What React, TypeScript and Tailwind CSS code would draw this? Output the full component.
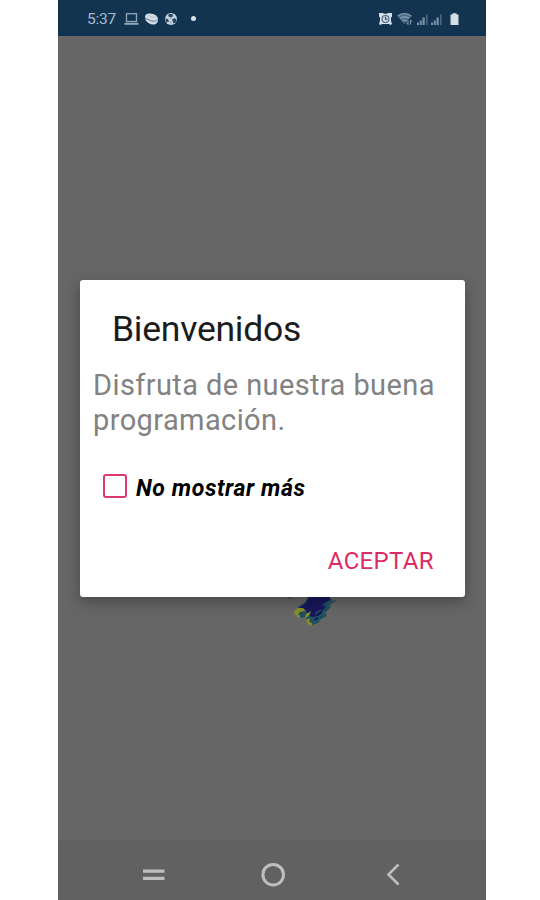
function LaptopIcon() {
  return (
    <svg width="15" height="14" viewBox="0 0 15 14" fill="none" stroke="#8fa6b8">
      <rect x="2.5" y="1.7" width="10" height="7.800" strokeWidth="1.300" />
      <path d="M0.5 11.8h14" strokeWidth="2" />
    </svg>
  );
}

function BallIcon() {
  return (
    <svg width="15" height="14" viewBox="0 0 15 14">
      <path d="M1 5C1 2 4 1 6 1.500c4 .3 8 2 8 6C14 11 12 12.500 9.500 12.500 6 12.500 3 10.500 1.500 8z" fill="#d3dee6" />
      <path d="M1 6.500c3 .2 5 2.500 8 2.700 2 .1 3-.5 4.500-1.500" stroke="#57748c" strokeWidth="1" fill="none" />
      <path d="M4 3.500l4 1.500 4 .2" stroke="#a5b7c5" strokeWidth=".8" fill="none" />
    </svg>
  );
}

function SoccerIcon() {
  return (
    <svg width="14" height="14" viewBox="0 0 14 14">
      <circle cx="7" cy="7" r="6" fill="#c4d2dd" />
      <path d="M5 2l3.500 0 .5 2.500-2.500 1L4 4zM1.300 6.500l2.700.5 1 2.500-2.500 1zM8 7.500l2.500-1.500 2 1.500-.5 3-2.500 1z" fill="#2a4a66" />
      <path d="M6.500 5.500L8 7.500M5 9.500l3 1.500" stroke="#7d95a8" strokeWidth=".8" />
    </svg>
  );
}

function AlarmIcon() {
  return (
    <svg width="15" height="14" viewBox="0 0 15 14">
      <path d="M1 1h4l1 .8h3L10 1h4v3.500l-1 1v3.500l1 3-1.500 1-1.500-1H4L2.500 13 1 12l1-3V5.500L1 4.500z" fill="#d5e0e8" />
      <circle cx="7.500" cy="7" r="3.500" stroke="#496780" strokeWidth="1.100" fill="#c5d3de" />
      <path d="M7.500 4.800V7.300h2" stroke="#30506b" strokeWidth="1.100" fill="none" />
    </svg>
  );
}

function WifiIcon() {
  return (
    <svg width="16" height="14" viewBox="0 0 16 14" fill="none">
      <path d="M.3 4C4.500 0 10.500 0 14.700 4L7.500 12z" fill="#4c6b84" />
      <path d="M.8 4C4.500.7 10.500.7 14.200 4M3 6.600c2.800-2.300 6.200-2.300 9 0M5.200 9c1.500-1.200 3-1.200 4.500 0" stroke="#8299ab" strokeWidth="1.300" />
      <path d="M11 12.500V8.500M9.700 11l1.300 1.500M13.500 8v4.500M13.500 8l1.500 1.500" stroke="#8fa5b6" />
    </svg>
  );
}

function SignalIcon() {
  return (
    <svg width="12" height="13" viewBox="0 0 12 13" fill="#7790a4">
      <path d="M0 9.500h2V12H0zM2.800 7.500h2V12h-2zM5.500 4.500h2.300V12H5.500z" />
      <path d="M9 1.500h1.500V12H9z" opacity=".6" />
    </svg>
  );
}

function BatteryIcon() {
  return (
    <svg width="10" height="14" viewBox="0 0 10 14" fill="#d3dee6">
      <path d="M2.500 1.300h4v1.200h2V13H.5V2.500h2z" />
    </svg>
  );
}

function StatusBar() {
  return (
    <header className="flex h-[36px] shrink-0 items-center justify-between bg-[#133450] pl-[29px] pr-[26px] pt-[2px]">
      <div className="flex items-center gap-[5px]">
        <span className="w-[32px] text-[15.500px] leading-[18px] tracking-[-0.200px] text-[#a9bccb]">5:37</span>
        <LaptopIcon />
        <BallIcon />
        <SoccerIcon />
        <span className="mb-px ml-2 size-[5px] rounded-full bg-[#d7e1e8]" />
      </div>
      <div className="flex items-center gap-[4px]">
        <AlarmIcon />
        <WifiIcon />
        <div className="flex items-center gap-[2px]">
          <SignalIcon />
          <SignalIcon />
        </div>
        <span className="ml-[3px]">
          <BatteryIcon />
        </span>
      </div>
    </header>
  );
}

function Logo() {
  return (
    <svg width="54" height="36" viewBox="0 0 54 36" className="absolute left-[228px] top-[597px]">
      <path d="M0 0l4 2 3-1z" fill="#505030" />
      <path d="M23 -3l-3 7-8 6-2 4-1 4 4 0 1 3 6-1 2 4 4 4 6-2 3-4 6-3-2-3 6-6-2-2 8-5-7 1-3-7z" fill="#20505a" />
      <path d="M24 -3l-4 9-7 5 0 4 7-1 3 5 5 1 1 4 6-4 1-5 5-3 4-9-3-6z" fill="#17175c" />
      <path d="M9 13l3-2 5 0 3 3-6 1-3 4-3-2zM10 19l4-1 0 3zM20 17l5-3-2 5-4 2zM20 23l4-2-1 4 3 1-1 3-3-2z" fill="#8a8f29" />
      <path d="M29 17l6-4M26 23l5-4M37 8l9-5-6 6 4-1-7 6 2 2-7 4 2 2-6 4" fill="none" stroke="#1f5965" strokeWidth="1.500" />
    </svg>
  );
}

function WelcomeDialog() {
  return (
    <section className="relative flex h-[317px] w-[385px] shrink-0 flex-col rounded-[3px] bg-white pb-[22px] pl-[13px] pr-[31px] pt-[28px] shadow-[0_5px_14px_rgba(0,0,0,0.3)]">
      <h1 className="pl-[19px] text-[35.500px] leading-[42px] tracking-[-0.250px] text-[#1c1c1c]">Bienvenidos</h1>
      <p className="mt-[18px] whitespace-nowrap text-[29px] leading-[35px] tracking-[0.400px] text-[#828282]">
        Disfruta de nuestra buena
        <br />
        programación.
      </p>
      <label className="mt-[34px] flex items-start gap-[9px] pl-[10px] pt-[2px]">
        <span className="size-[24px] rounded-[3px] border-2 border-[#db396c]" />
        <span className="whitespace-nowrap pt-px text-[23px] font-bold italic leading-[28px] tracking-[0.600px] text-black">
          No mostrar más
        </span>
      </label>
      <button className="mt-auto self-end text-[24px] leading-[28px] tracking-[0.350px] text-[#dc2b62]">ACEPTAR</button>
    </section>
  );
}

function NavigationBar() {
  return (
    <nav className="flex h-[60px] shrink-0 items-center justify-between bg-[#616161] pl-[85px] pr-[84px] pt-[9px]">
      <svg width="22" height="14" viewBox="0 0 22 14" fill="#bebebe">
        <path d="M0 1.500h21.500v3.200H0zM0 8.800h21.500v3.200H0z" />
      </svg>
      <svg width="26" height="26" viewBox="0 0 26 26" fill="none" stroke="#bebebe" strokeWidth="3">
        <circle cx="13.200" cy="12.700" r="10.300" />
      </svg>
      <svg width="22" height="24" viewBox="0 0 22 24" fill="none" stroke="#bebebe" strokeWidth="2.600">
        <path d="M18.500 1.500L8.500 11.500l10 10" />
      </svg>
    </nav>
  );
}

export default function App() {
  return (
    <div className="flex h-[900px] w-[540px] bg-white pl-[58px] font-['Roboto',sans-serif]">
      <div className="relative flex w-[428px] flex-col overflow-hidden bg-[#666666]">
        <StatusBar />
        <Logo />
        <main className="flex flex-1 flex-col pl-[22px] pt-[244px]">
          <WelcomeDialog />
        </main>
        <NavigationBar />
      </div>
    </div>
  );
}
